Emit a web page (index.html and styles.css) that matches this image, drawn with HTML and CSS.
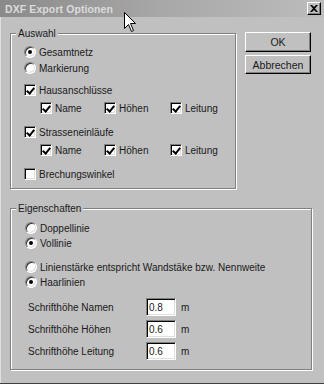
FILE: index.html
```html
<!DOCTYPE html>
<html>
<head>
<meta charset="utf-8">
<link rel="stylesheet" href="styles.css">
</head>
<body>
<div class="win">
  <div class="title">
    <span class="title-text">DXF Export Optionen</span>
    <span class="close"><svg width="8" height="7" viewBox="0 0 8 7"><path d="M0 0h2l2 2 2-2h2L5 3.5 8 7H6L4 5 2 7H0l3-3.5z" fill="#000"/></svg></span>
  </div>
  <div class="content">
    <div class="top">
      <div class="grp auswahl">
        <span class="legend">Auswahl</span>
        <div class="row r1"><span class="radio on"></span><span>Gesamtnetz</span></div>
        <div class="row r2"><span class="radio"></span><span>Markierung</span></div>
        <div class="row r3"><span class="cb on"></span><span>Hausanschlüsse</span></div>
        <div class="sub r4">
          <div class="row"><span class="cb on"></span><span>Name</span></div>
          <div class="row"><span class="cb on"></span><span>Höhen</span></div>
          <div class="row"><span class="cb on"></span><span>Leitung</span></div>
        </div>
        <div class="row r5"><span class="cb on"></span><span>Strasseneinläufe</span></div>
        <div class="sub r6">
          <div class="row"><span class="cb on"></span><span>Name</span></div>
          <div class="row"><span class="cb on"></span><span>Höhen</span></div>
          <div class="row"><span class="cb on"></span><span>Leitung</span></div>
        </div>
        <div class="row r7"><span class="cb"></span><span>Brechungswinkel</span></div>
      </div>
      <div class="buttons">
        <div class="btn">OK</div>
        <div class="btn">Abbrechen</div>
      </div>
    </div>
    <div class="grp eigen">
      <span class="legend">Eigenschaften</span>
      <div class="row e1"><span class="radio"></span><span>Doppellinie</span></div>
      <div class="row e2"><span class="radio on"></span><span>Vollinie</span></div>
      <div class="row e3"><span class="radio"></span><span>Linienstärke entspricht Wandstäke bzw. Nennweite</span></div>
      <div class="row e4"><span class="radio on"></span><span>Haarlinien</span></div>
      <div class="field f1"><span class="lbl">Schrifthöhe Namen</span><span class="input">0.8</span><span class="unit">m</span></div>
      <div class="field"><span class="lbl">Schrifthöhe Höhen</span><span class="input">0.6</span><span class="unit">m</span></div>
      <div class="field"><span class="lbl">Schrifthöhe Leitung</span><span class="input">0.6</span><span class="unit">m</span></div>
    </div>
  </div>
  <svg class="cursor" width="13" height="21" viewBox="0 0 13 21"><path d="M0.5 0.5V16.5L4.5 12.5L7.5 19.5L9.5 18.5L6.5 11.5H11.5Z" fill="#fff" stroke="#000" stroke-width="1"/></svg>
</div>
</body>
</html>
```

FILE: styles.css
```css
html, body {
  margin: 0;
  padding: 0;
  background: #c0c0c0;
}
.win {
  position: relative;
  width: 324px;
  height: 384px;
  background: #c0c0c0;
  font-family: "Liberation Sans", Arial, sans-serif;
  font-size: 10px;
  color: #1a1a1a;
  overflow: hidden;
  box-sizing: border-box;
  border-bottom: 1px solid #404040;
}
.title {
  height: 17px;
  display: flex;
  align-items: center;
  justify-content: space-between;
  background: linear-gradient(90deg, #8a8a8a 0%, #a8a8a8 50%, #bcbcbc 100%);
  padding: 0 3px 0 5px;
}
.title-text {
  font-weight: bold;
  font-size: 10.5px;
  color: #dcdcdc;
  letter-spacing: 0.1px;
}
.close {
  width: 14px;
  height: 13px;
  background: #c0c0c0;
  box-sizing: border-box;
  border: 1px solid;
  border-color: #fff #000 #000 #fff;
  box-shadow: inset -1px -1px 0 #808080;
  display: flex;
  align-items: center;
  justify-content: center;
}
.content {
  padding: 16px 0 0 10px;
  border-left: 1px solid #e0e0e0;
  height: 366px;
  box-sizing: border-box;
}
.top {
  display: flex;
  align-items: flex-start;
}
.grp {
  position: relative;
  border: 1px solid #808080;
  box-shadow: inset 1px 1px 0 #fff, 1px 1px 0 #fff;
  box-sizing: border-box;
}
.legend {
  position: absolute;
  top: -7px;
  left: 5px;
  padding: 0 2px;
  background: #c0c0c0;
  line-height: 13px;
}
.auswahl {
  width: 226px;
  height: 156px;
  padding: 11px 0 0 13px;
  margin-left: -1px;
}
.row {
  display: flex;
  align-items: center;
  height: 14px;
  white-space: nowrap;
}
.row > span:last-child {
  margin-left: 3px;
}
.r2 { margin-top: 2px; }
.r3 { margin-top: 8px; }
.r4 { margin-top: 4px; }
.r5 { margin-top: 10px; }
.r6 { margin-top: 4px; }
.r7 { margin-top: 10px; }
.sub {
  display: grid;
  grid-template-columns: 64px 66px auto;
  padding-left: 16px;
}
.radio {
  position: relative;
  width: 12px;
  height: 12px;
  border-radius: 50%;
  box-sizing: border-box;
  border: 1px solid;
  border-color: #808080 #fff #fff #808080;
  box-shadow: inset 1px 1px 0 #303030, inset -1px -1px 0 #dfdfdf;
  background: #fff;
  flex: none;
}
.radio.on::after {
  content: "";
  position: absolute;
  left: 3px;
  top: 3px;
  width: 4px;
  height: 4px;
  border-radius: 50%;
  background: #000;
}
.cb {
  position: relative;
  width: 12px;
  height: 12px;
  box-sizing: border-box;
  border: 1px solid;
  border-color: #808080 #fff #fff #808080;
  box-shadow: inset 1px 1px 0 #000, inset -1px -1px 0 #dfdfdf;
  background: #fff;
  flex: none;
}
.cb.on::after {
  content: "";
  position: absolute;
  left: 3px;
  top: 1px;
  width: 3px;
  height: 6px;
  border: solid #000;
  border-width: 0 2px 2px 0;
  transform: rotate(40deg);
}
.buttons {
  margin-left: 9px;
  margin-top: -1px;
  display: flex;
  flex-direction: column;
  gap: 3px;
}
.btn {
  width: 66px;
  height: 19px;
  box-sizing: border-box;
  border: 1px solid;
  border-color: #fff #000 #000 #fff;
  box-shadow: inset -1px -1px 0 #808080;
  display: flex;
  align-items: center;
  justify-content: center;
  font-size: 10.5px;
}
.btn:first-child { height: 20px; }
.eigen {
  margin-top: 19px;
  margin-left: -1px;
  width: 302px;
  height: 162px;
  padding: 12px 0 0 14px;
}
.e2 { margin-top: 1px; }
.e3 { margin-top: 10px; }
.e4 { margin-top: 1px; }
.field {
  display: flex;
  align-items: center;
  height: 18px;
  margin-top: 4px;
  padding-left: 3px;
}
.f1 { margin-top: 9px; }
.lbl {
  width: 118px;
}
.input {
  width: 30px;
  height: 18px;
  box-sizing: border-box;
  border: 1px solid;
  border-color: #808080 #fff #fff #808080;
  box-shadow: inset 1px 1px 0 #000, inset -1px -1px 0 #dfdfdf;
  background: #fff;
  padding: 3px 0 0 2px;
  line-height: 12px;
}
.unit {
  margin-left: 5px;
}
.cursor {
  position: absolute;
  left: 124px;
  top: 12px;
}
```
